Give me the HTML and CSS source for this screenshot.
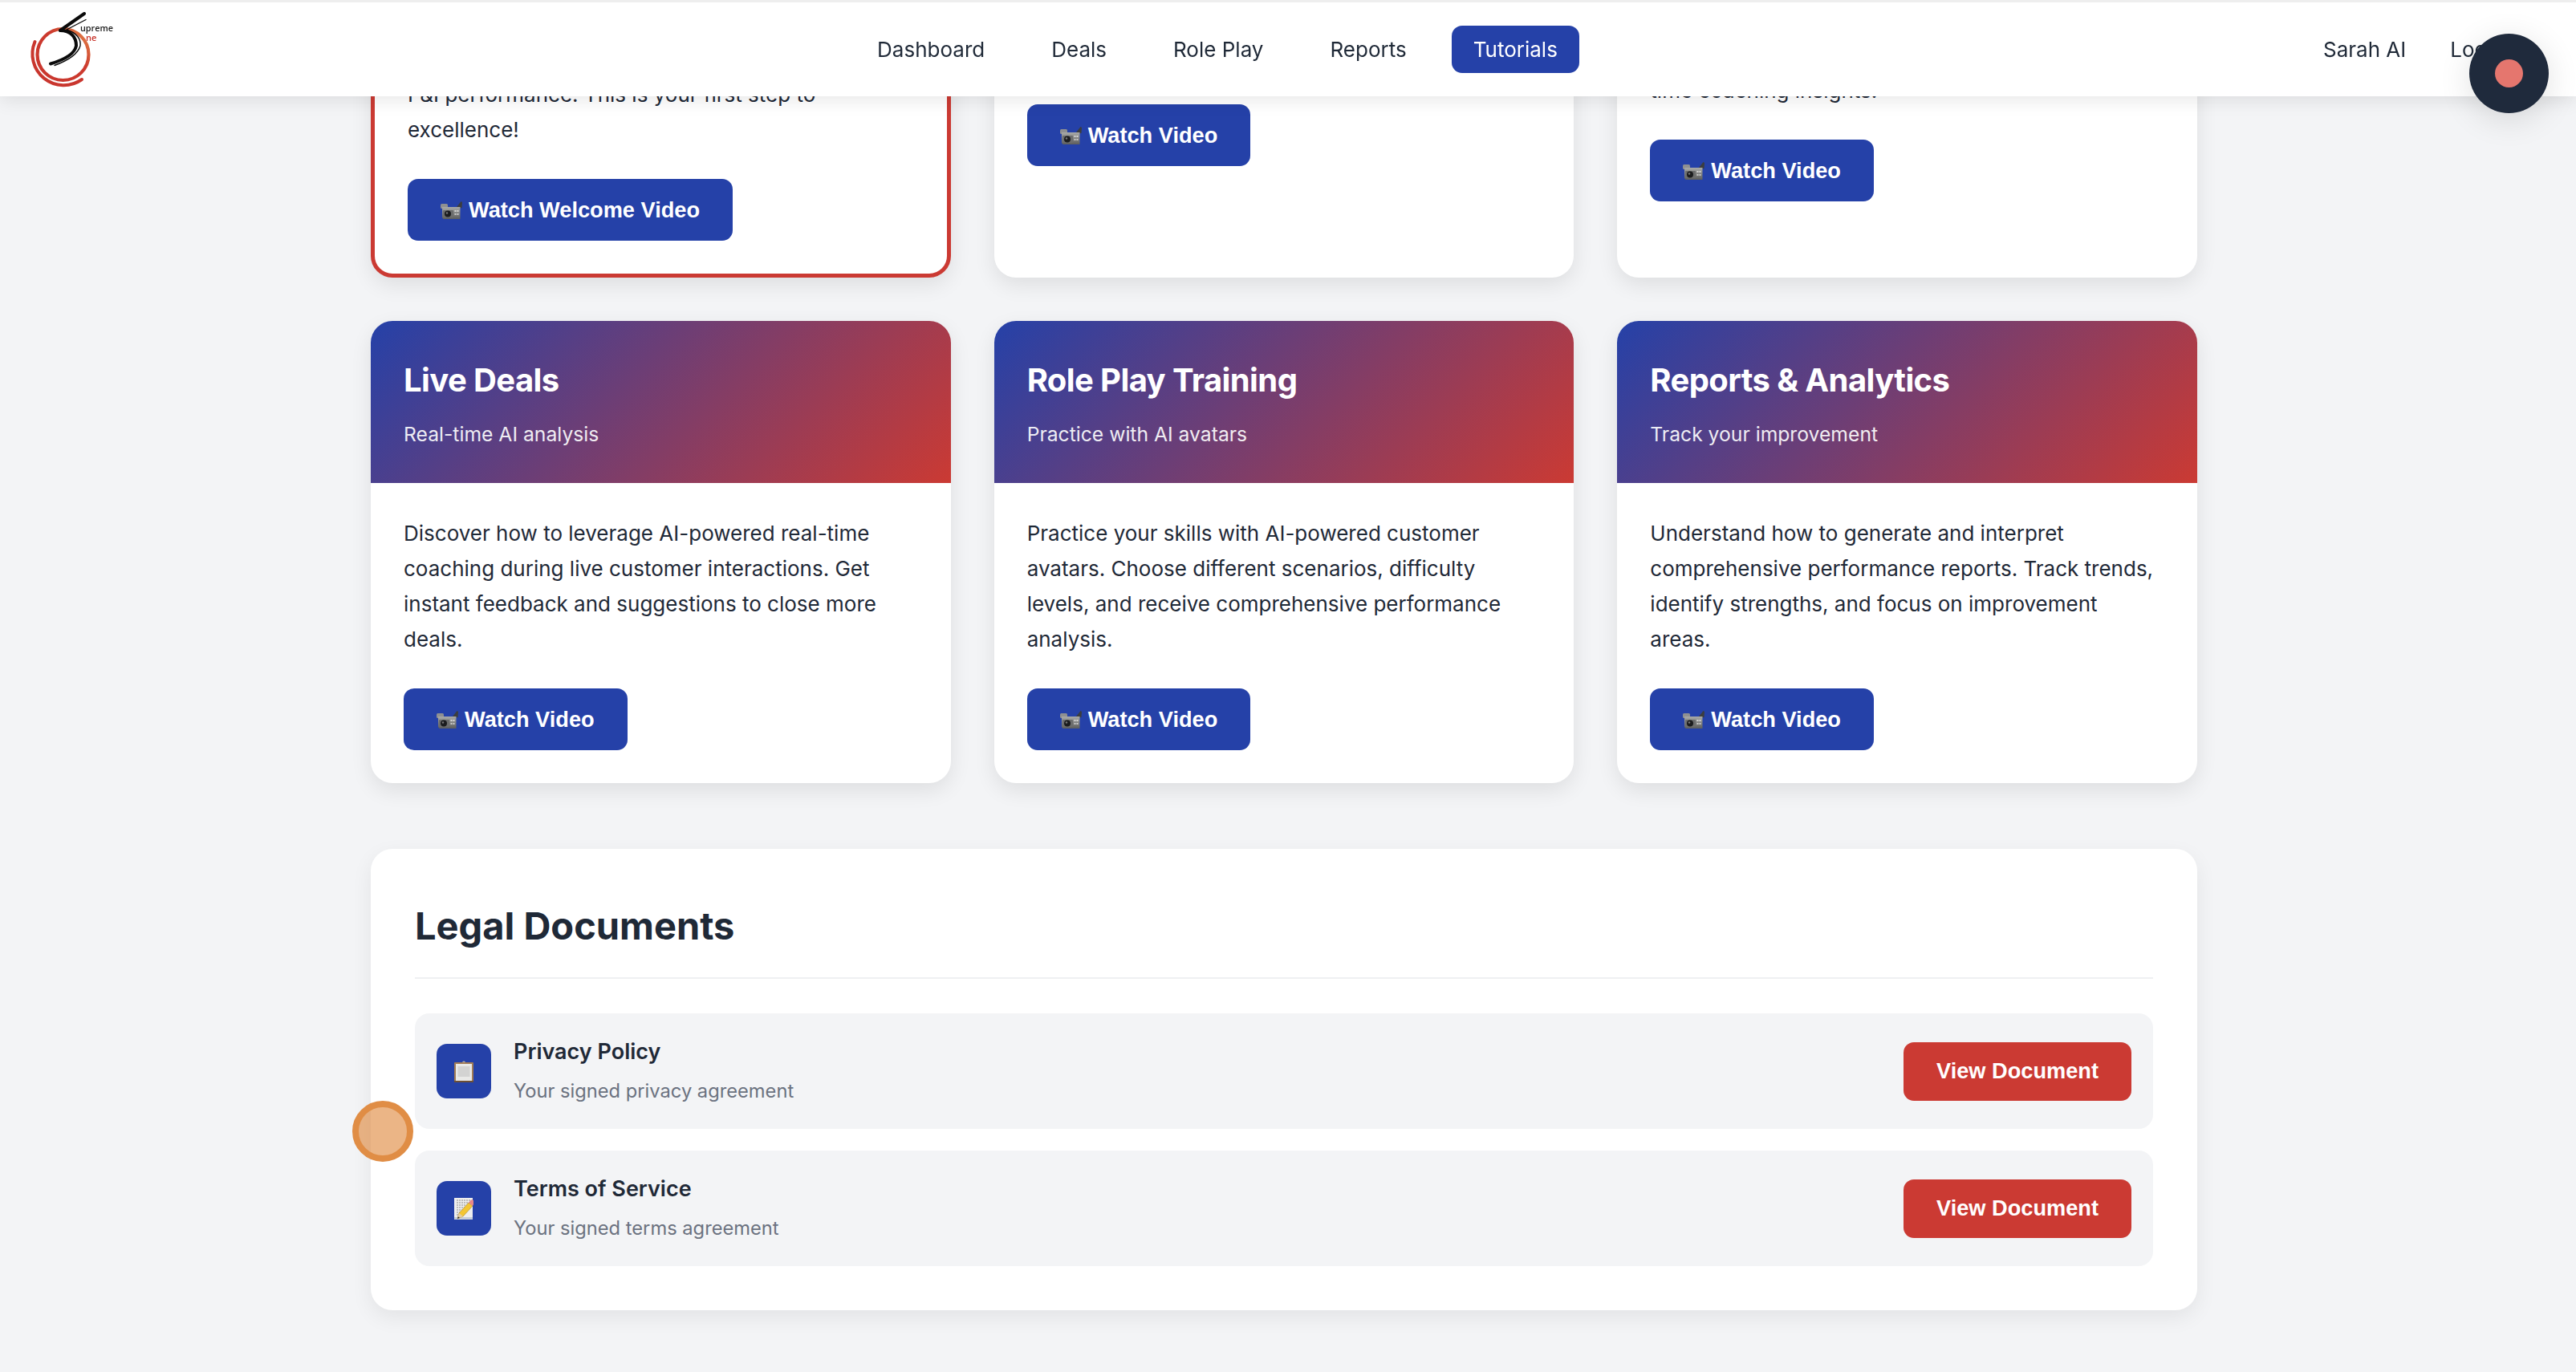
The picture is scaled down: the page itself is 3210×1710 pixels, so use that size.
FILE: index.html
```html
<!DOCTYPE html>
<html lang="en">
<head>
<meta charset="utf-8">
<title>Tutorials</title>
<link rel="stylesheet" href="styles.css">
</head>
<body>
<svg class="defs" width="0" height="0" aria-hidden="true">
  <defs>
    <linearGradient id="cam" x1="0" y1="0" x2="0" y2="1"><stop offset="0" stop-color="#a9aaa8"/><stop offset="1" stop-color="#5c5d5c"/></linearGradient>
    <symbol id="camcorder" viewBox="0 0 27 24">
      <path d="M20 8 25.500 1 27 2 26.500 9 20 10Z" fill="#3b3d3f"/>
      <rect x="0" y="4" width="9" height="6" rx="1.500" fill="#8f9091"/>
      <path d="M2 8H24.500V23H3.500L2 21Z" fill="url(#cam)"/>
      <rect x="3" y="12" width="13" height="9" rx="1" fill="#6c6d6d"/>
      <circle cx="9" cy="16.500" r="4" fill="#1b1c1e"/>
      <circle cx="8" cy="15.500" r="1.200" fill="#777"/>
      <rect x="17.500" y="12" width="2" height="2" fill="#d6d6d6"/>
      <rect x="20.500" y="12" width="2" height="2" fill="#d6d6d6"/>
      <rect x="17.500" y="16" width="2" height="2" fill="#c9c9c9"/>
      <rect x="20.500" y="16" width="2" height="2" fill="#c9c9c9"/>
    </symbol>
    <linearGradient id="ring" x1="0" y1="1" x2="1" y2="0"><stop offset="0" stop-color="#c9362e"/><stop offset=".6" stop-color="#cc3a2e"/><stop offset="1" stop-color="#e58a4a"/></linearGradient>
  </defs>
</svg>

<header class="topbar">
  <a class="logo" href="#" aria-label="Supreme One">
    <svg class="logo-svg" viewBox="0 0 103 104" width="103" height="104">
      <circle cx="42.500" cy="58" r="32" fill="none" stroke="url(#ring)" stroke-width="4.200"/>
      <path d="M7.500 42A39 39 0 0 0 66 89" fill="none" stroke="#c9362e" stroke-width="4" stroke-linecap="round"/>
      <path d="M69 7 39 28C52 28 59 36 59 47 57 58 42 65 27 69.500" fill="none" stroke="#0b0b0b" stroke-width="4" stroke-linecap="round" stroke-linejoin="round"/>
      <path d="M71 14.500 47 27C60 31 65 39 64 47 61 58 47 66 32 71.500" fill="none" stroke="#0b0b0b" stroke-width="1.400" stroke-linecap="round"/>
      <text x="64" y="29" class="logo-a">upreme</text>
      <text x="71" y="40.500" class="logo-b">ne</text>
    </svg>
  </a>
  <nav class="links">
    <a class="link" href="#">Dashboard</a>
    <a class="link" href="#">Deals</a>
    <a class="link" href="#">Role Play</a>
    <a class="link" href="#">Reports</a>
    <a class="link active" href="#">Tutorials</a>
  </nav>
  <div class="user">
    <span>Sarah AI</span>
    <a class="logout" href="#">Logout</a>
  </div>
</header>

<main class="page">
  <section class="grid">
    <article class="card featured">
      <div class="card-head"><h2>Welcome to Supreme One</h2><p>Start here</p></div>
      <div class="card-body">
        <p>Meet your AI coaching platform and learn how it works to lift your deal flow, compliance and<br>F&amp;I performance. This is your first step to excellence!</p>
        <button class="btn blue"><svg class="emoji"><use href="#camcorder"/></svg> Watch Welcome Video</button>
      </div>
    </article>
    <article class="card">
      <div class="card-head"><h2>Dashboard Overview</h2><p>Your command center</p></div>
      <div class="card-body">
        <p>Learn how to read your dashboard and see your key metrics at a glance.</p>
        <button class="btn blue"><svg class="emoji"><use href="#camcorder"/></svg> Watch Video</button>
      </div>
    </article>
    <article class="card">
      <div class="card-head"><h2>Deal Management</h2><p>Work every deal</p></div>
      <div class="card-body">
        <p>Learn how to manage every deal from start to finish with compliance checks, tools and real-<br>time coaching insights.</p>
        <button class="btn blue"><svg class="emoji"><use href="#camcorder"/></svg> Watch Video</button>
      </div>
    </article>

    <article class="card">
      <div class="card-head"><h2>Live Deals</h2><p>Real-time AI analysis</p></div>
      <div class="card-body">
        <p>Discover how to leverage AI-powered real-time coaching during live customer interactions. Get instant feedback and suggestions to close more deals.</p>
        <button class="btn blue"><svg class="emoji"><use href="#camcorder"/></svg> Watch Video</button>
      </div>
    </article>
    <article class="card">
      <div class="card-head"><h2>Role Play Training</h2><p>Practice with AI avatars</p></div>
      <div class="card-body">
        <p>Practice your skills with AI-powered customer avatars. Choose different scenarios, difficulty levels, and receive comprehensive performance analysis.</p>
        <button class="btn blue"><svg class="emoji"><use href="#camcorder"/></svg> Watch Video</button>
      </div>
    </article>
    <article class="card">
      <div class="card-head"><h2>Reports &amp; Analytics</h2><p>Track your improvement</p></div>
      <div class="card-body">
        <p>Understand how to generate and interpret comprehensive performance reports. Track trends, identify strengths, and focus on improvement areas.</p>
        <button class="btn blue"><svg class="emoji"><use href="#camcorder"/></svg> Watch Video</button>
      </div>
    </article>
  </section>

  <section class="legal">
    <h2 class="legal-title">Legal Documents</h2>
    <div class="doc-list">
      <div class="doc">
        <div class="doc-icon">
          <svg viewBox="0 0 24 27" width="24" height="27">
            <path d="M10 2.500A2 2 0 0 1 14 2.500L15 3H9Z" fill="#b5b1aa"/>
            <rect x="0" y="2" width="24" height="25" rx="1" fill="#a27c55"/>
            <rect x="2" y="4" width="20" height="21" fill="#e9e9e7"/>
            <rect x="4.500" y="7" width="15" height="13" fill="#d3d3d2"/>
            <rect x="0" y="25" width="24" height="2" fill="#6e5035"/>
          </svg>
        </div>
        <div class="doc-text">
          <h3>Privacy Policy</h3>
          <p>Your signed privacy agreement</p>
        </div>
        <button class="btn red">View Document</button>
      </div>
      <div class="doc">
        <div class="doc-icon">
          <svg viewBox="0 0 24 27" width="24" height="27">
            <rect x="0" y="0" width="23" height="27" fill="#eeeeee"/>
            <rect x="0" y="24" width="23" height="3" fill="#c6cdd8"/>
            <path d="M3 3H20M3 6H20M3 9H16M3 12H13M3 15H11M3 18H8M3 21H6" stroke="#8b8b8b" stroke-width="1" stroke-dasharray="2 1"/>
            <path d="M4 26 6 19 18 6 23 10 11 23Z" fill="#f3c633" stroke="#a9862a" stroke-width=".6"/>
            <path d="M4 26 6 19 11 23Z" fill="#e6cfa0"/>
            <path d="M4 26 4.800 23.300 6.800 24.800Z" fill="#222"/>
            <path d="M18 6 20 3.500A2.500 2.500 0 0 1 24.500 7.500L23 10Z" fill="#e8878a"/>
          </svg>
        </div>
        <div class="doc-text">
          <h3>Terms of Service</h3>
          <p>Your signed terms agreement</p>
        </div>
        <button class="btn red">View Document</button>
      </div>
    </div>
  </section>
</main>

<div class="cursor" aria-hidden="true"></div>
<div class="record" aria-hidden="true"><span class="record-dot"></span></div>
</body>
</html>
```

FILE: styles.css
```css
* { box-sizing: border-box; }

html, body {
  margin: 0;
  height: 100%;
  overflow: hidden;
}

body {
  background: #f3f4f6;
  color: #1f2937;
  font-family: Inter, "Liberation Sans", sans-serif;
  font-size: 26px;
}

.defs { position: absolute; }

h2, h3, p { margin: 0; }

a { color: inherit; text-decoration: none; }

/* fixed top navigation */
.topbar {
  position: fixed;
  top: 0;
  left: 0;
  right: 0;
  z-index: 10;
  height: 120px;
  display: flex;
  align-items: center;
  justify-content: space-between;
  padding: 0 71px 0 36px;
  background: #fff;
  border-top: 3px solid #eeeeee;
  box-shadow: 0 4px 22px rgba(0, 0, 0, .1);
}

.logo { display: block; width: 103px; height: 104px; }
.logo-svg { display: block; overflow: visible; filter: blur(.5px); }
.logo-a { font: 600 10.800px "Open Sans", sans-serif; fill: #1a1a1a; }
.logo-b { font: 600 11px "Open Sans", sans-serif; fill: #c9362e; }

.links { display: flex; align-items: center; gap: 29px; }

.link {
  padding: 13px 27px;
  border-radius: 13px;
  font-size: 26px;
  line-height: 33px;
  color: #1f2937;
}

.link.active { background: #2541a8; color: #fff; }

.user { display: flex; align-items: center; gap: 55px; font-size: 26px; }

/* tutorial cards */
.page {
  width: 2276px;
  margin: -240px 0 0 462px;
}

.grid {
  display: grid;
  grid-template-columns: repeat(3, 1fr);
  gap: 54px;
}

.card {
  background: #fff;
  border-radius: 27px;
  overflow: hidden;
  box-shadow: 0 9px 27px rgba(0, 0, 0, .09);
}

.card.featured { border: 5px solid #cb3a33; }

.card-head {
  height: 202px;
  padding: 49px 41px 0;
  color: #fff;
  background: linear-gradient(135deg, #2541a8, #cb3a33);
}

.card-head h2 {
  font-size: 40px;
  line-height: 50px;
  font-weight: 700;
  letter-spacing: -.6px;
}

.card-head p {
  margin-top: 25px;
  font-size: 24.700px;
  line-height: 34px;
  opacity: .9;
}

.card-body { padding: 41px 46px 41px 41px; }

.card-body p {
  font-size: 26px;
  line-height: 44px;
  margin-bottom: 39px;
  color: #1f2937;
}

.btn {
  display: inline-flex;
  align-items: center;
  justify-content: center;
  border: 0;
  border-radius: 13px;
  color: #fff;
  font-family: "Liberation Sans", Arial, sans-serif;
  font-size: 27.200px;
  font-weight: 700;
}

.btn.blue { height: 77px; padding: 0 41px; gap: 8px; background: #2541a8; }
.btn.red { height: 73px; padding: 0 41px; background: #cb3a33; flex: none; }

.emoji { width: 27px; height: 24px; flex: none; }

/* legal panel */
.legal {
  margin-top: 82px;
  height: 575px;
  padding: 55px;
  background: #fff;
  border-radius: 27px;
  box-shadow: 0 9px 27px rgba(0, 0, 0, .07);
}

.legal-title {
  height: 107px;
  border-bottom: 2px solid #eff0f2;
  font-size: 47px;
  line-height: 82px;
  font-weight: 700;
  color: #1f2937;
}

.doc-list {
  display: flex;
  flex-direction: column;
  gap: 27px;
  margin-top: 43px;
}

.doc {
  height: 144px;
  display: flex;
  align-items: center;
  padding: 0 27px;
  background: #f3f4f6;
  border-radius: 18px;
}

.doc-icon {
  width: 68px;
  height: 68px;
  flex: none;
  display: flex;
  align-items: center;
  justify-content: center;
  background: #2541a8;
  border-radius: 13px;
}

.doc-text { flex: 1; margin-left: 28px; }

.doc-text h3 {
  font-size: 27px;
  line-height: 36px;
  font-weight: 600;
  color: #1f2937;
}

.doc-text p {
  margin-top: 13px;
  font-size: 23.700px;
  line-height: 36px;
  color: #6b7280;
}

/* floating overlays */
.cursor {
  position: fixed;
  left: 439px;
  top: 1372px;
  width: 76px;
  height: 76px;
  border-radius: 50%;
  border: 8px solid #e08d45;
  background: rgba(224, 141, 69, .65);
  z-index: 20;
}

.record {
  position: fixed;
  left: 3077px;
  top: 42px;
  width: 99px;
  height: 99px;
  border-radius: 50%;
  background: #1f2a3c;
  display: flex;
  align-items: center;
  justify-content: center;
  box-shadow: 0 8px 40px rgba(0, 0, 0, .12);
  z-index: 20;
}

.record-dot {
  width: 35px;
  height: 35px;
  border-radius: 50%;
  background: #e5766e;
}
```
